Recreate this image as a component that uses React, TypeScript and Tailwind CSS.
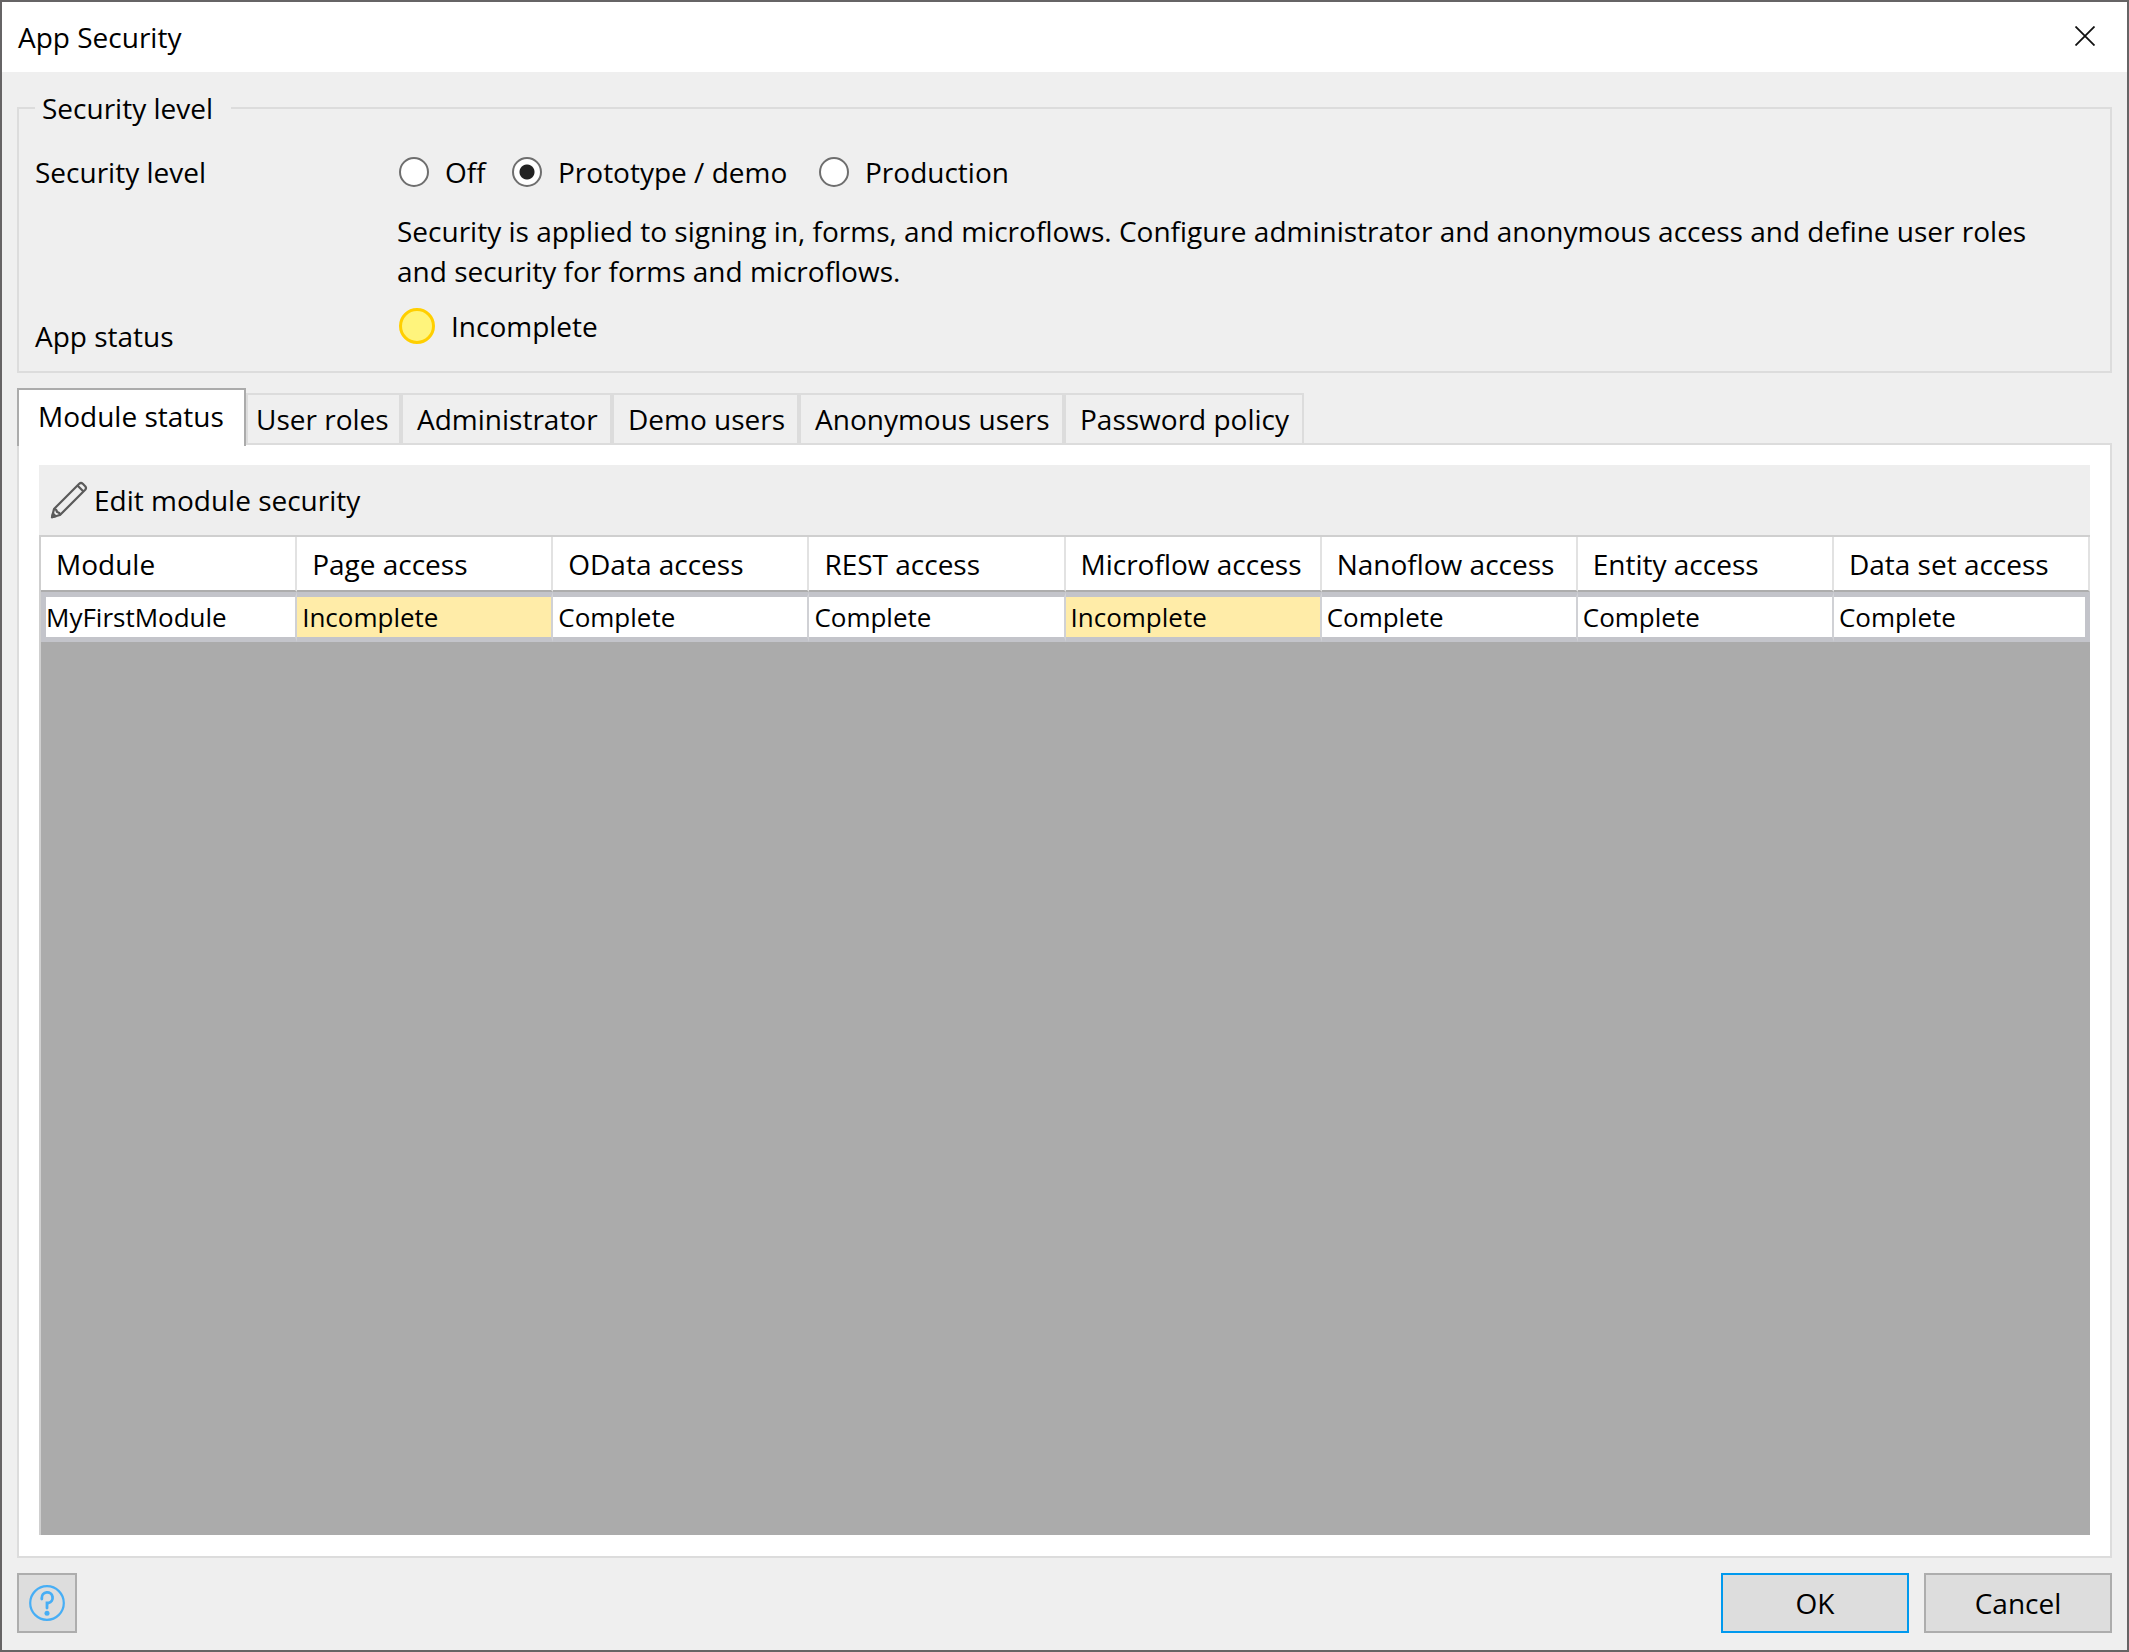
import { useState } from 'react'

type Level = 'off' | 'prototype' | 'production'

const levels: { id: Level; label: string; className: string }[] = [
  { id: 'off', label: 'Off', className: 'w-[113px]' },
  { id: 'prototype', label: 'Prototype / demo', className: 'w-[307px]' },
  { id: 'production', label: 'Production', className: '' },
]

const tabs = [
  { label: 'Module status', className: 'w-[229px] px-[19px]' },
  { label: 'User roles', className: 'w-[155px] px-2' },
  { label: 'Administrator', className: 'w-[211px] px-[14px]' },
  { label: 'Demo users', className: 'w-[187px] px-[14px]' },
  { label: 'Anonymous users', className: 'w-[265px] px-[14px]' },
  { label: 'Password policy', className: 'w-[240px] px-[14px]' },
]

const columns = [
  'Module',
  'Page access',
  'OData access',
  'REST access',
  'Microflow access',
  'Nanoflow access',
  'Entity access',
  'Data set access',
]

const rows = [
  ['MyFirstModule', 'Incomplete', 'Complete', 'Complete', 'Incomplete', 'Complete', 'Complete', 'Complete'],
]

function PencilIcon() {
  return (
    <svg viewBox="0 0 38 38" fill="none" stroke="#5a5a5a" strokeWidth="2.2" strokeLinejoin="round" className="h-[38px] w-[38px] shrink-0" aria-hidden="true">
      <path d="M2 36.2 L4 28 L29.2 2.8 Q31 1.2 32.8 2.8 L35.2 5.2 Q36.8 7 35.2 8.8 L10 34 Z" />
      <path d="M4 28 Q6.5 28 7 31 Q10 31.500 10 34" />
      <path d="M27.5 4.500 L33.5 10.500" />
      <path d="M2 36.200 L3 32.500 L5.700 35.200 Z" fill="#5a5a5a" />
    </svg>
  )
}

function HelpIcon() {
  return (
    <svg viewBox="0 0 36 36" fill="none" stroke="#47aef5" className="h-9 w-9" aria-hidden="true">
      <circle cx="18" cy="18" r="16.8" strokeWidth="2.2" />
      <path d="M12.8 14 V13 A5.4 5.4 0 1 1 19.500 18 H18 V23" strokeWidth="2.8" strokeLinecap="round" />
      <circle cx="18" cy="28.3" r="2.5" fill="#47aef5" stroke="none" />
    </svg>
  )
}

function TitleBar() {
  return (
    <header className="flex h-[70px] items-center justify-between bg-white pl-4 pr-8">
      <h1>App Security</h1>
      <button type="button" aria-label="Close" className="pb-[2px]">
        <svg viewBox="0 0 20 20" stroke="#111" strokeWidth="1.8" className="h-5 w-5">
          <path d="M0.5 0.5 L19.5 19.5 M19.5 0.5 L0.5 19.5" />
        </svg>
      </button>
    </header>
  )
}

function SecurityLevel() {
  const [level, setLevel] = useState<Level>('prototype')

  return (
    <fieldset className="border-2 border-[#dcdcdc] pb-[15px] pl-4 pr-12">
      <legend className="h-10 pl-[7px] pr-[18px]">Security level</legend>
      <div className="flex pt-6">
        <div className="w-[362px] shrink-0">Security level</div>
        <div className="flex-1">
          <div className="flex h-10 items-center pl-[2px]">
            {levels.map(({ id, label, className }) => (
              <label key={id} className={`flex items-center gap-4 whitespace-nowrap ${className}`}>
                <input
                  type="radio"
                  name="level"
                  checked={level === id}
                  onChange={() => setLevel(id)}
                  className="h-[30px] w-[30px] shrink-0 appearance-none rounded-full border-2 border-[#6e6e6e] bg-white checked:bg-[radial-gradient(circle,#222_7px,#fff_8px)]"
                />
                {label}
              </label>
            ))}
          </div>
          <p className="pt-[19px]">
            Security is applied to signing in, forms, and microflows. Configure administrator and anonymous access and define user roles and security for forms and microflows.
          </p>
        </div>
      </div>
      <div className="flex pt-[15px]">
        <div className="w-[362px] shrink-0 pt-[10px]">App status</div>
        <div className="flex h-10 items-center gap-4 pl-[2px]">
          <span className="h-9 w-9 rounded-full border-3 border-[#ffcf00] bg-[#fff47c]" />
          Incomplete
        </div>
      </div>
    </fieldset>
  )
}

function ModuleTable() {
  return (
    <div className="flex-1 border-l-2 border-t-2 border-[#cfcfcf] bg-[#ababab]">
      <table className="w-full table-fixed border-separate border-spacing-0">
        <thead>
          <tr>
            {columns.map((name) => (
              <th
                key={name}
                scope="col"
                className="h-[55px] whitespace-nowrap border-b-2 border-r-2 border-b-[#adadad] border-r-[#e2e2e2] bg-white p-0 pl-[15px] text-left font-normal"
              >
                {name}
              </th>
            ))}
          </tr>
        </thead>
        <tbody>
          {rows.map((row) => (
            <tr key={row[0]} className="text-[26px]">
              {row.map((value, i) => (
                <td
                  key={columns[i]}
                  className={`h-[50px] border-y-5 border-r-2 border-y-[#c3c4ca] border-r-[#d0d1d5] p-0 pl-[5px] first:border-l-5 first:border-l-[#c3c4ca] first:pl-0 last:border-r-5 last:border-r-[#c3c4ca] ${value === 'Incomplete' ? 'bg-[#ffeca8]' : 'bg-white'}`}
                >
                  {value}
                </td>
              ))}
            </tr>
          ))}
        </tbody>
      </table>
    </div>
  )
}

export default function App() {
  const [tab, setTab] = useState(0)

  return (
    <div className="flex min-h-screen flex-col border-2 border-[#666465] bg-[#efefef] font-['Open_Sans','Noto_Sans',sans-serif] text-[28px] leading-10 text-black">
      <TitleBar />
      <main className="flex flex-1 flex-col px-[15px] pt-[16px]">
        <SecurityLevel />
        <div role="tablist" className="mt-[15px] flex items-end">
          {tabs.map(({ label, className }, i) => (
            <button
              key={label}
              type="button"
              role="tab"
              aria-selected={tab === i}
              onClick={() => setTab(i)}
              className={`whitespace-nowrap border-2 border-b-0 text-left ${className} ${
                tab === i ? 'z-10 -mb-[3px] h-[58px] border-[#ababab] bg-white pb-1' : 'h-[50px] border-[#dcdcdc]'
              }`}
            >
              {label}
            </button>
          ))}
        </div>
        <section className="flex flex-1 flex-col border-2 border-[#dcdcdc] bg-white p-5 pb-[21px]">
          <div className="flex h-[70px] items-center bg-[#eeeeee] pl-[11px]">
            <button type="button" className="flex items-center gap-[6px]">
              <PencilIcon />
              Edit module security
            </button>
          </div>
          <ModuleTable />
        </section>
      </main>
      <footer className="flex gap-[15px] px-[15px] pb-[17px] pt-[15px]">
        <button type="button" aria-label="Help" className="mr-auto flex h-[60px] w-[60px] items-center justify-center border-2 border-[#adadad] bg-[#dddddd]">
          <HelpIcon />
        </button>
        <button type="button" className="h-[60px] w-[188px] border-2 border-[#0099ee] bg-[#dddddd]">
          OK
        </button>
        <button type="button" className="h-[60px] w-[188px] border-2 border-[#adadad] bg-[#dddddd]">
          Cancel
        </button>
      </footer>
    </div>
  )
}
